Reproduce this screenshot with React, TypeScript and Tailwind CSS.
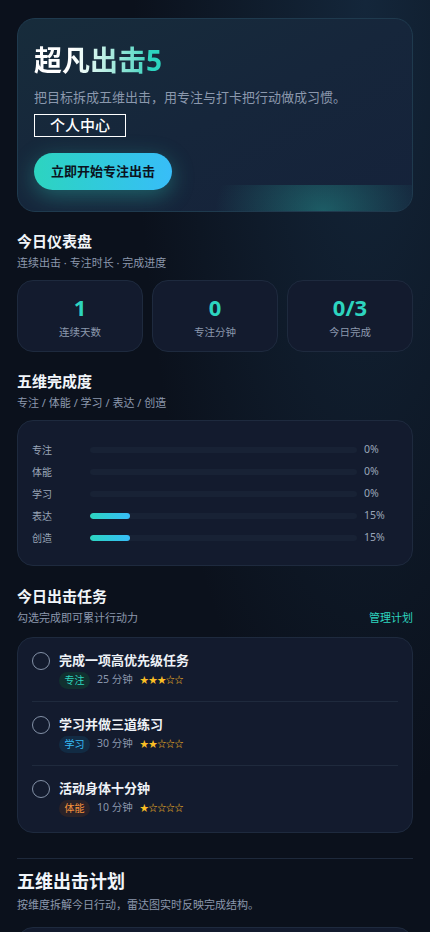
import React from "react";

const stats = [
	{ value: "1", label: "连续天数" },
	{ value: "0", label: "专注分钟" },
	{ value: "0/3", label: "今日完成" },
];

const dims = [
	{ label: "专注", pct: 0 },
	{ label: "体能", pct: 0 },
	{ label: "学习", pct: 0 },
	{ label: "表达", pct: 15 },
	{ label: "创造", pct: 15 },
];

const tasks = [
	{
		title: "完成一项高优先级任务",
		tag: "专注",
		tagClass: "bg-[#11302f] text-[#2dd4bf]",
		mins: 25,
		stars: 3,
	},
	{
		title: "学习并做三道练习",
		tag: "学习",
		tagClass: "bg-[#122b43] text-[#38bdf8]",
		mins: 30,
		stars: 2,
	},
	{
		title: "活动身体十分钟",
		tag: "体能",
		tagClass: "bg-[#2a2228] text-[#fb923c]",
		mins: 10,
		stars: 1,
	},
];

function SectionHead({ title, sub }: { title: string; sub: string }) {
	return (
		<div>
			<h2 className="text-[15px] font-bold leading-5 text-[#f1f5f9]">{title}</h2>
			<p className="mt-1 text-[11px] leading-4 text-[#8b98ad]">{sub}</p>
		</div>
	);
}

export default function App() {
	return (
		<div className="min-h-screen bg-[#0b111c] bg-[radial-gradient(ellipse_at_85%_0%,rgba(30,64,95,0.45),transparent_45%)] px-[17px] pt-[18px] pb-10 font-['Noto_Sans','Noto_Sans_CJK_SC',sans-serif]">
			{/* Hero */}
			<section className="relative overflow-hidden rounded-[18px] border border-[#1f3a4e] bg-gradient-to-br from-[#172c3b] via-[#16263b] to-[#15223a] px-[16px] pt-6 pb-[21px]">
				<div className="pointer-events-none absolute right-0 bottom-0 h-[26px] w-[50%] bg-[radial-gradient(ellipse_55%_300%_at_55%_100%,rgba(45,212,191,0.32),transparent)]" />
				<h1 className="relative text-[28px] font-bold leading-[34px]">
					<span className="bg-gradient-to-r from-white from-30% to-[#2dd4bf] to-90% bg-clip-text text-transparent">
						超凡出击5
					</span>
				</h1>
				<p className="relative mt-2.5 text-[13px] leading-5 text-[#8b98ad]">
					把目标拆成五维出击，用专注与打卡把行动做成习惯。
				</p>
				<button className="relative mt-[7px] flex h-[23px] items-center border border-white px-[15px] text-[15px] font-medium leading-none text-white">
					个人中心
				</button>
				<button className="relative mt-4 flex h-[37px] items-center rounded-full bg-gradient-to-r from-[#2dd4bf] to-[#38bdf8] px-[17px] text-[13px] font-bold text-[#0b1220] shadow-[0_6px_22px_rgba(45,212,191,0.35)]">
					立即开始专注出击
				</button>
			</section>

			{/* Dashboard */}
			<section className="mt-[19px]">
				<SectionHead title="今日仪表盘" sub="连续出击 · 专注时长 · 完成进度" />
				<div className="mt-[9px] grid grid-cols-3 gap-[9px]">
					{stats.map((s) => (
						<div
							key={s.label}
							className="flex h-[72px] flex-col items-center justify-center rounded-2xl border border-[#1e2a3e] bg-[#131b2e]"
						>
							<div className="text-[22px] font-bold leading-7 text-[#2dd4bf]">
								{s.value}
							</div>
							<div className="mt-[3px] text-[10.5px] leading-4 text-[#8b98ad]">
								{s.label}
							</div>
						</div>
					))}
				</div>
			</section>

			{/* Five dims */}
			<section className="mt-[19px]">
				<SectionHead title="五维完成度" sub="专注 / 体能 / 学习 / 表达 / 创造" />
				<div className="mt-[9px] flex flex-col gap-[6px] rounded-2xl border border-[#1e2a3e] bg-[#131b2e] px-[14px] pt-[21px] pb-[19px]">
					{dims.map((d) => (
						<div key={d.label} className="flex h-4 items-center">
							<div className="w-[58px] text-[10px] text-[#9aa6b8]">{d.label}</div>
							<div className="h-[6px] flex-1 overflow-hidden rounded-full bg-[#182235]">
								<div
									className="h-full rounded-full bg-gradient-to-r from-[#2dd4bf] to-[#38bdf8]"
									style={{ width: `${d.pct}%` }}
								/>
							</div>
							<div className="w-[41px] pl-[7px] text-[10.5px] text-[#9aa6b8]">
								{d.pct}%
							</div>
						</div>
					))}
				</div>
			</section>

			{/* Tasks */}
			<section className="mt-5">
				<div className="flex items-end justify-between">
					<SectionHead title="今日出击任务" sub="勾选完成即可累计行动力" />
					<span className="text-[11px] leading-4 text-[#2dd4bf]">管理计划</span>
				</div>
				<div className="mt-[11px] rounded-2xl border border-[#1e2a3e] bg-[#131b2e] px-[14px] pb-[3px]">
					{tasks.map((t, i) => (
						<div
							key={t.title}
							className={`flex items-start gap-[9px] py-[12.5px] ${
								i < tasks.length - 1 ? "border-b border-[#1f2a3d]" : ""
							}`}
						>
							<div className="mt-[1px] h-[18px] w-[18px] shrink-0 rounded-full border-[1.5px] border-[#8391a7]" />
							<div>
								<div className="text-[13px] font-bold leading-[18px] text-[#eef2f7]">
									{t.title}
								</div>
								<div className="mt-[3px] flex items-center">
									<span
										className={`flex h-[17px] items-center rounded-full px-[5.5px] text-[10px] ${t.tagClass}`}
									>
										{t.tag}
									</span>
									<span className="ml-[7px] text-[10.5px] text-[#8b98ad]">
										{t.mins} 分钟
									</span>
									<span className="ml-[7px] text-[9px] tracking-[-0.3px] text-[#fbbf24]">
										{"★".repeat(t.stars) + "☆".repeat(5 - t.stars)}
									</span>
								</div>
							</div>
						</div>
					))}
				</div>
			</section>

			{/* Plan */}
			<section className="mt-[25px] border-t border-[#1e293b] pt-[10px]">
				<h2 className="text-[18px] font-bold leading-6 text-[#f1f5f9]">五维出击计划</h2>
				<p className="mt-1 text-[11px] leading-4 text-[#8b98ad]">
					按维度拆解今日行动，雷达图实时反映完成结构。
				</p>
				<div className="mt-[14px] h-[300px] rounded-2xl border border-[#1e2a3e] bg-[#131b2e]" />
			</section>
		</div>
	);
}
